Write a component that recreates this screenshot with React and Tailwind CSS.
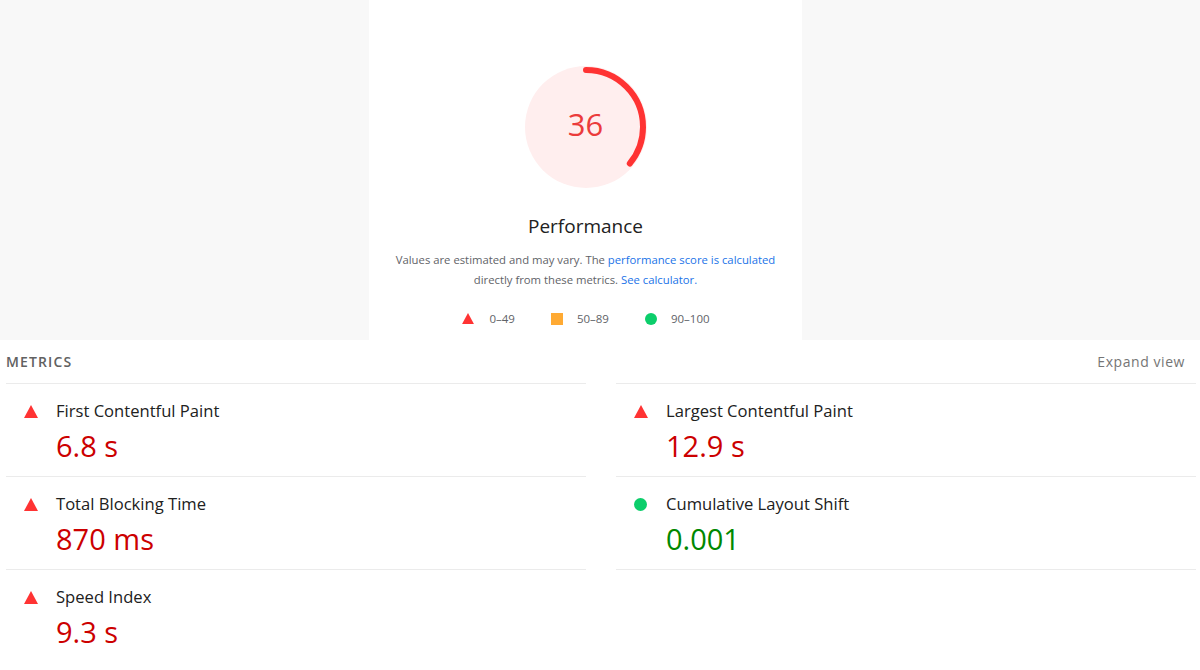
const metrics = [
  { name: "First Contentful Paint", value: "6.8 s", status: "fail" },
  { name: "Largest Contentful Paint", value: "12.9 s", status: "fail" },
  { name: "Total Blocking Time", value: "870 ms", status: "fail" },
  { name: "Cumulative Layout Shift", value: "0.001", status: "pass" },
  { name: "Speed Index", value: "9.3 s", status: "fail" },
];

function Triangle({ className = "" }) {
  return (
    <svg width="14" height="13" viewBox="0 0 14 13" className={className}>
      <polygon points="7,0 14,13 0,13" fill="#ff3333" />
    </svg>
  );
}

function Gauge({ score }) {
  const r = 57;
  const c = 2 * Math.PI * r;
  const len = (score / 100) * c;
  return (
    <div className="relative w-[128px] h-[128px]">
      <svg width="128" height="128" viewBox="0 0 128 128" className="-rotate-90">
        <circle cx="64" cy="64" r="61" fill="#ffeeee" stroke="none" />
        <circle
          cx="64"
          cy="64"
          r={r}
          fill="none"
          stroke="#ff3333"
          strokeWidth="6"
          strokeLinecap="round"
          strokeDasharray={`${len} ${c}`}
        />
      </svg>
      <div className="absolute inset-0 flex items-center justify-center text-[31px] text-[#eb3b3b] pb-[6px]">
        {score}
      </div>
    </div>
  );
}

function MetricRow({ m, last }) {
  const pass = m.status === "pass";
  return (
    <div className={`flex h-[93px] pl-[18px] ${last ? "" : "border-b border-[#ebebeb]"}`}>
      <div className="w-[32px] pt-[21px]">
        {pass ? (
          <div className="w-[13px] h-[13px] rounded-full bg-[#0cce6b]" />
        ) : (
          <Triangle />
        )}
      </div>
      <div className="flex flex-col pt-[15px]">
        <div className="text-[16.6px] leading-[24px] text-[#212121]">{m.name}</div>
        <div className={`text-[29px] leading-[40px] mt-[3px] ${pass ? "text-[#008800]" : "text-[#cc0000]"}`}>
          {m.value}
        </div>
      </div>
    </div>
  );
}

export default function App() {
  const left = [metrics[0], metrics[2], metrics[4]];
  const right = [metrics[1], metrics[3]];
  return (
    <div className="w-[1200px] h-[670px] bg-white overflow-hidden" style={{ fontFamily: '"Open Sans", "Noto Sans", sans-serif' }}>
      {/* score area */}
      <div className="h-[340px] bg-[#f8f8f8] flex pl-[369px]">
        <div className="w-[433px] bg-white flex flex-col items-center pt-[63px]">
          <Gauge score={36} />
          <div className="mt-[22px] text-[19px] leading-[26px] text-[#212121]">Performance</div>
          <div className="mt-[11px] text-[11.3px] leading-[20px] text-[#5f6368] text-center w-[400px]">
            Values are estimated and may vary. The{" "}
            <span className="text-[#1a73e8]">performance score is calculated</span>
            <br />
            directly from these metrics. <span className="text-[#1a73e8]">See calculator.</span>
          </div>
          <div className="mt-[20px] flex items-center text-[11.5px] text-[#5f6368] gap-[36px]">
            <div className="flex items-center gap-[14px]">
              <Triangle className="scale-[0.85]" />
              <span>0–49</span>
            </div>
            <div className="flex items-center gap-[14px]">
              <div className="w-[12px] h-[12px] bg-[#ffaa33]" />
              <span>50–89</span>
            </div>
            <div className="flex items-center gap-[14px]">
              <div className="w-[12px] h-[12px] rounded-full bg-[#0cce6b]" />
              <span>90–100</span>
            </div>
          </div>
        </div>
      </div>

      {/* metrics */}
      <div className="px-[6px]">
        <div className="flex items-center justify-between h-[43px]">
          <span className="text-[14px] font-semibold tracking-[0.08em] text-[#616161]">METRICS</span>
          <span className="text-[14px] tracking-[0.04em] text-[#757575] pr-[9px]">Expand view</span>
        </div>
        <div className="grid grid-cols-[580px_580px] gap-x-[30px]">
          <div className="border-t border-[#ebebeb]">
            {left.map((m, i) => (
              <MetricRow key={m.name} m={m} last={i === left.length - 1} />
            ))}
          </div>
          <div className="border-t border-[#ebebeb]">
            {right.map((m) => (
              <MetricRow key={m.name} m={m} />
            ))}
          </div>
        </div>
      </div>
    </div>
  );
}
